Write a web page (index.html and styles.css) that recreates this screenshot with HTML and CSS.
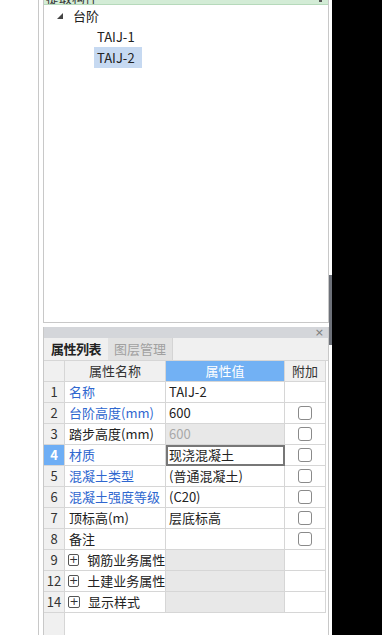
FILE: index.html
```html
<!DOCTYPE html>
<html>
<head>
<meta charset="utf-8">
<link rel="stylesheet" href="styles.css">
</head>
<body>
<div class="page">
  <div class="gutter"></div>
  <div class="main">
    <div class="content">
      <div class="tree-panel">
        <div class="green-head"><span class="gh-text">提取构件</span><span class="gh-mark"></span></div>
        <div class="tree">
          <div class="tree-row lvl0">
            <svg class="tri" width="6" height="6" viewBox="0 0 6 6"><polygon points="6,0 6,6 0,6" fill="#444"/></svg>
            <span>台阶</span>
          </div>
          <div class="tree-row lvl1"><span class="item">TAIJ-1</span></div>
          <div class="tree-row lvl1"><span class="item sel">TAIJ-2</span></div>
        </div>
      </div>
      <div class="prop-panel">
        <div class="prop-head"><span class="close">×</span></div>
        <div class="tabs">
          <div class="tab active">属性列表</div>
          <div class="tab inactive">图层管理</div>
        </div>
        <div class="grid">
          <div class="c num hd"></div><div class="c hd name-h">属性名称</div><div class="c hd val-h">属性值</div><div class="c hd add-h">附加</div>

          <div class="c num">1</div><div class="c nm blue">名称</div><div class="c v">TAIJ-2</div><div class="c ad"></div>
          <div class="c num">2</div><div class="c nm blue">台阶高度(mm)</div><div class="c v">600</div><div class="c ad"><span class="cb"></span></div>
          <div class="c num">3</div><div class="c nm">踏步高度(mm)</div><div class="c v dis">600</div><div class="c ad"><span class="cb"></span></div>
          <div class="c num cur">4</div><div class="c nm blue">材质</div><div class="c v edit">现浇混凝土</div><div class="c ad"><span class="cb"></span></div>
          <div class="c num">5</div><div class="c nm blue">混凝土类型</div><div class="c v">(普通混凝土)</div><div class="c ad"><span class="cb"></span></div>
          <div class="c num">6</div><div class="c nm blue">混凝土强度等级</div><div class="c v">(C20)</div><div class="c ad"><span class="cb"></span></div>
          <div class="c num">7</div><div class="c nm">顶标高(m)</div><div class="c v">层底标高</div><div class="c ad"><span class="cb"></span></div>
          <div class="c num">8</div><div class="c nm">备注</div><div class="c v"></div><div class="c ad"><span class="cb"></span></div>
          <div class="c num">9</div><div class="c nm grp"><span class="plus">+</span>钢筋业务属性</div><div class="c v dis"></div><div class="c ad"></div>
          <div class="c num">12</div><div class="c nm grp"><span class="plus">+</span>土建业务属性</div><div class="c v dis"></div><div class="c ad"></div>
          <div class="c num">14</div><div class="c nm grp"><span class="plus">+</span>显示样式</div><div class="c v dis"></div><div class="c ad"></div>
        </div>
        <div class="filler"><div class="filler-num"></div></div>
      </div>
    </div>
    <div class="strip"><div class="splitter"></div></div>
  </div>
  <div class="black"></div>
</div>
</body>
</html>
```

FILE: styles.css
```css
* { box-sizing: border-box; }
html, body { margin: 0; padding: 0; background: #fff; }
body {
  font-family: "Noto Sans CJK SC", "Noto Sans", sans-serif;
  font-size: 13px;
  color: #222;
}
.page { display: flex; height: 635px; width: 382px; overflow: hidden; }
.gutter { width: 39px; border-right: 1px solid #c8c8c8; flex: none; }
.main { width: 293px; padding-left: 4px; display: flex; flex: none; }
.content { width: 286px; display: flex; flex-direction: column; }
.strip { width: 3px; padding-top: 275px; }
.splitter { height: 70px; background: #6d7179; }
.black { flex: 1; background: #000; }

.tree-panel {
  height: 323px;
  border: 1px solid #c8c8c8;
  border-top: none;
  flex: none;
}
.green-head {
  height: 5px;
  background: #d3ecd6;
  border-bottom: 1px solid #b6d9bb;
  overflow: hidden;
  display: flex;
  justify-content: space-between;
  padding: 0 6px 0 2px;
}
.gh-text { font-size: 13px; line-height: 13px; margin-top: -9px; color: #333; }
.gh-mark { width: 3px; height: 2px; background: #555; }
.tree-row { height: 21px; display: flex; align-items: center; line-height: 21px; }
.lvl0 { padding-left: 13px; }
.lvl0 .tri { margin-right: 10px; margin-top: 1px; }
.lvl1 { padding-left: 50px; }
.item { padding: 0 3px; height: 21px; display: inline-block; }
.sel { background: #c6d9f1; width: 48px; }

.prop-panel {
  margin-top: 4px;
  flex: 1;
  border-left: 1px solid #c8c8c8;
  border-right: 1px solid #c8c8c8;
  display: flex;
  flex-direction: column;
}
.prop-head {
  height: 11px;
  background: #d4d6da;
  display: flex;
  justify-content: flex-end;
  align-items: center;
  padding-right: 4px;
}
.close { font-size: 11px; line-height: 11px; color: #7a7a7a; font-family: "DejaVu Sans", sans-serif; }
.tabs {
  height: 23px;
  background: #f0f0f0;
  border-bottom: 1px solid #d6d6d6;
  display: flex;
}
.tab { height: 22px; line-height: 22px; white-space: nowrap; }
.tab.active { width: 64px; color: #222; font-weight: bold; padding-left: 7px; letter-spacing: -0.5px; }
.tab.inactive { width: 65px; background: #e2e2e2; color: #a0a0a0; border-right: 1px solid #d4d4d4; padding-left: 6px; }

.grid {
  display: grid;
  grid-template-columns: 21px 101px 119px 41px;
  grid-auto-rows: 21px;
  width: 282px;
}
.c {
  border-right: 1px solid #d6d6d6;
  border-bottom: 1px solid #d6d6d6;
  line-height: 20px;
  white-space: nowrap;
  overflow: hidden;
}
.num { background: #f0f0f0; text-align: center; color: #333; font-size: 13px; }
.num.cur { background: #6eaef5; color: #fff; font-weight: bold; }
.hd { background: #f0f0f0; text-align: center; color: #333; }
.val-h { background: #72b1f4; color: #fff; }
.nm { padding-left: 4px; color: #222; }
.nm.blue { color: #2f67cf; }
.v { padding-left: 3px; }
.v.dis { background: #e8e8e8; color: #a8a8a8; }
.v.edit { border: 2px solid #777; line-height: 16px; padding-left: 1px; }
.ad { display: flex; justify-content: center; align-items: center; }
.cb {
  width: 14px; height: 14px;
  border: 1px solid #8a8a8a;
  border-radius: 3px;
  background: #fff;
}
.grp { display: flex; align-items: center; padding-left: 3px; }
.plus {
  width: 12px; height: 12px;
  border: 1px solid #555;
  border-radius: 2px;
  font-size: 11px;
  line-height: 9px;
  text-align: center;
  margin-right: 8px;
  font-family: "DejaVu Sans", sans-serif;
  color: #333;
}
.filler { flex: 1; display: flex; }
.filler-num { width: 21px; background: #f0f0f0; border-right: 1px solid #d6d6d6; }
```
